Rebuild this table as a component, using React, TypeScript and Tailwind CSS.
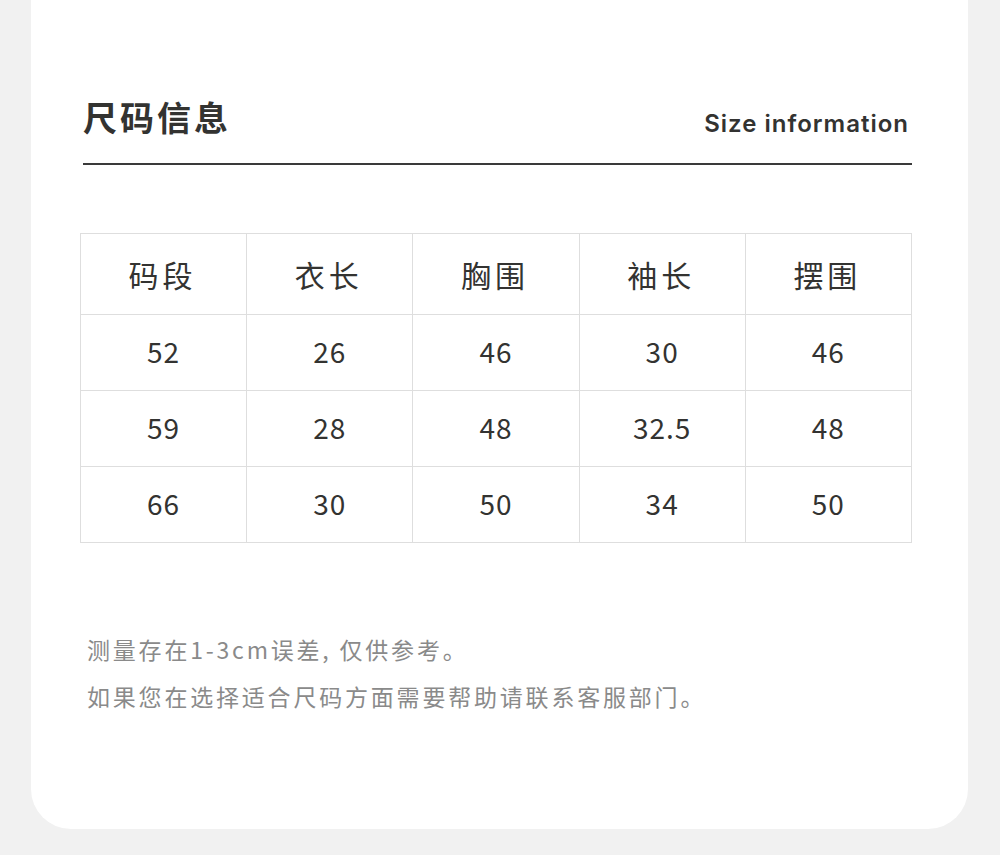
const headers = ["码段", "衣长", "胸围", "袖长", "摆围"];

const rows = [
  ["52", "26", "46", "30", "46"],
  ["59", "28", "48", "32.5", "48"],
  ["66", "30", "50", "34", "50"],
];

const cjk = "font-['Noto_Sans_CJK_SC','Noto_Sans',sans-serif]";

const App = () => {
  return (
    <div className="w-full h-[855px] bg-[#f1f1f1] overflow-hidden">
      <div className={`ml-[31px] w-[937px] h-[829px] bg-white rounded-b-[40px] ${cjk}`}>
        {/* 标题 */}
        <div className="ml-[52px] w-[829px] pt-[93px] pb-[22px] flex justify-between items-end border-b-2 border-[#3a3a3a]">
          <h2 className="text-[34px] leading-[48px] font-bold tracking-[3px] text-[#333331]">
            尺码信息
          </h2>
          <span className="text-[24px] leading-[30px] font-semibold tracking-[1px] text-[#333331] mr-[3px] mb-[2px] font-['Inter',sans-serif]">
            Size information
          </span>
        </div>

        {/* 尺码表 */}
        <table className="ml-[49px] mt-[68px] w-[832px] border-collapse table-fixed text-[#333331]">
          <thead>
            <tr>
              {headers.map((h) => (
                <th
                  key={h}
                  className="h-[81px] border border-[#dedede] font-normal text-[30px] tracking-[4px] pl-0 pr-[2px]"
                >
                  {h}
                </th>
              ))}
            </tr>
          </thead>
          <tbody>
            {rows.map((row, i) => (
              <tr key={i}>
                {row.map((v, j) => (
                  <td
                    key={j}
                    className="h-[76px] border border-[#dedede] text-center text-[28px] tracking-[1px] pb-[3px]"
                  >
                    {v}
                  </td>
                ))}
              </tr>
            ))}
          </tbody>
        </table>

        {/* 备注 */}
        <div className="ml-[56px] mt-[83px] text-[23px] leading-[47px] tracking-[2.8px] text-[#8a8a8a]">
          <p>测量存在1-3cm误差, 仅供参考。</p>
          <p>如果您在选择适合尺码方面需要帮助请联系客服部门。</p>
        </div>
      </div>
    </div>
  );
};

export default App;
